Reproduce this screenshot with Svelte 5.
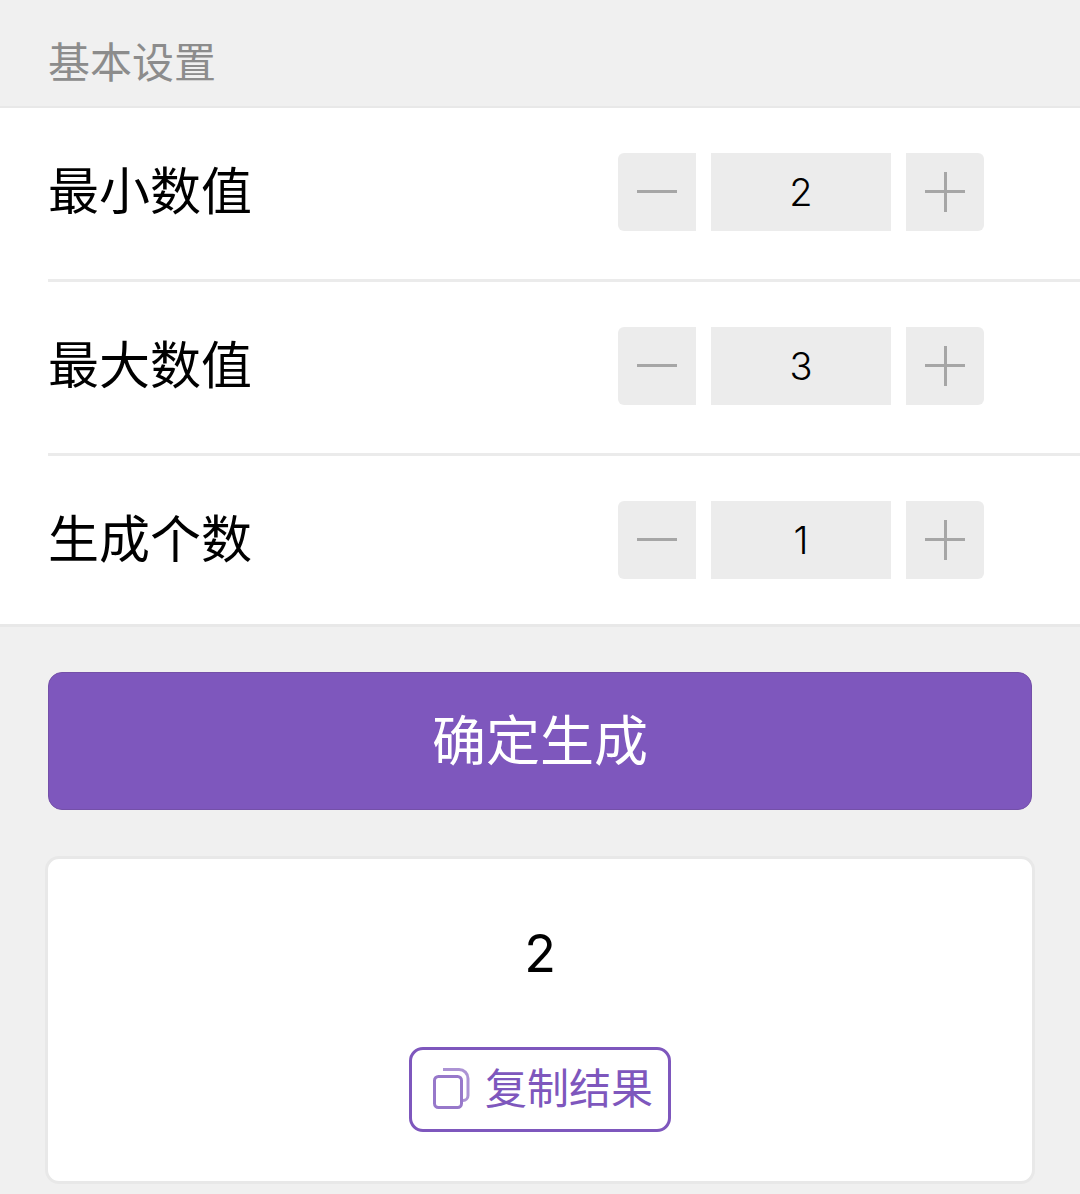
<script>
  const rows = [
    { label: '最小数值', value: 2 },
    { label: '最大数值', value: 3 },
    { label: '生成个数', value: 1 }
  ];
</script>

<div class="page">
  <div class="title">基本设置</div>
  <div class="group">
    {#each rows as row}
      <div class="row">
        <div class="label">{row.label}</div>
        <div class="stepper">
          <button class="step minus" aria-label="减少"><span class="h"></span></button>
          <div class="value">{row.value}</div>
          <button class="step plus" aria-label="增加"><span class="h"></span><span class="v"></span></button>
        </div>
      </div>
    {/each}
  </div>
  <div class="actions">
    <button class="primary"><span class="primary-text">确定生成</span></button>
  </div>
  <div class="card">
    <div class="result">2</div>
    <button class="copy">
      <svg class="icon" viewBox="0 0 38 43" width="38" height="43" fill="none" stroke="currentColor" stroke-width="3">
        <rect x="2.5" y="9.5" width="27" height="31" rx="4" />
        <path d="M11 2.5h16a9 9 0 0 1 9 9v17a5 5 0 0 1-5 5" opacity=".8" />
      </svg>
      <span class="copy-text">复制结果</span>
    </button>
  </div>
</div>

<style>
  :global(body) {
    margin: 0;
    background: #f0f0f0;
  }
  .page {
    width: 1080px;
    height: 1194px;
    overflow: hidden;
    background: #f0f0f0;
    font-family: "Noto Sans CJK SC", "Noto Sans", sans-serif;
    box-sizing: border-box;
  }
  .title {
    height: 106px;
    box-sizing: border-box;
    padding: 30px 48px 0;
    font-size: 42px;
    line-height: 60px;
    color: #8c8c8c;
  }
  .group {
    background: #fff;
    border-top: 2px solid #e8e8e8;
    border-bottom: 3px solid #e8e8e8;
    height: 521px;
    box-sizing: border-box;
    padding-left: 48px;
  }
  .row {
    height: 174px;
    box-sizing: border-box;
    border-bottom: 3px solid #ebebeb;
    display: flex;
    align-items: center;
    justify-content: space-between;
    padding: 0 96px 3px 0;
  }
  .row:last-child {
    border-bottom: none;
    height: 172px;
    padding-bottom: 4px;
  }
  .label {
    font-size: 51px;
    line-height: 70px;
    color: #000;
    padding-bottom: 8px;
  }
  .stepper {
    display: flex;
    gap: 15px;
    height: 78px;
  }
  .step {
    width: 78px;
    height: 78px;
    border: none;
    padding: 0;
    background: #ececec;
    position: relative;
  }
  .minus {
    border-radius: 6px 0 0 6px;
  }
  .plus {
    border-radius: 0 6px 6px 0;
  }
  .h,
  .v {
    position: absolute;
    background: #a6a6a6;
  }
  .h {
    left: 19px;
    top: 37px;
    width: 40px;
    height: 3px;
  }
  .v {
    left: 38px;
    top: 19px;
    width: 3px;
    height: 40px;
  }
  .value {
    width: 180px;
    height: 78px;
    background: #ececec;
    text-align: center;
    font-family: "Inter", sans-serif;
    font-size: 38px;
    font-weight: 300;
    line-height: 78px;
    color: #000;
  }
  .actions {
    padding: 45px 48px 46px;
  }
  .primary {
    display: block;
    width: 100%;
    height: 138px;
    border: 1px solid #7450a8;
    border-radius: 14px;
    background: #7e57bd;
    color: #fff;
    font-family: inherit;
    font-size: 54px;
    padding: 0 0 8px;
  }
  .card {
    margin: 0 45px;
    height: 328px;
    box-sizing: border-box;
    background: #fff;
    border: 3px solid #e8e8e8;
    border-radius: 14px;
    display: flex;
    flex-direction: column;
    align-items: center;
    padding-top: 60px;
  }
  .result {
    font-family: "Inter", sans-serif;
    font-size: 52px;
    line-height: 70px;
    color: #000;
  }
  .copy {
    margin-top: 58px;
    width: 262px;
    height: 85px;
    box-sizing: border-box;
    background: #fff;
    border: 3px solid #7e57bd;
    border-radius: 14px;
    color: #7e57bd;
    font-family: inherit;
    font-size: 42px;
    display: flex;
    align-items: center;
    padding: 0 0 0 20px;
    gap: 15px;
  }
  .icon {
    flex: none;
    opacity: 0.8;
    margin-top: -2px;
  }
  .copy-text {
    line-height: 60px;
    margin-top: -8px;
  }
</style>
